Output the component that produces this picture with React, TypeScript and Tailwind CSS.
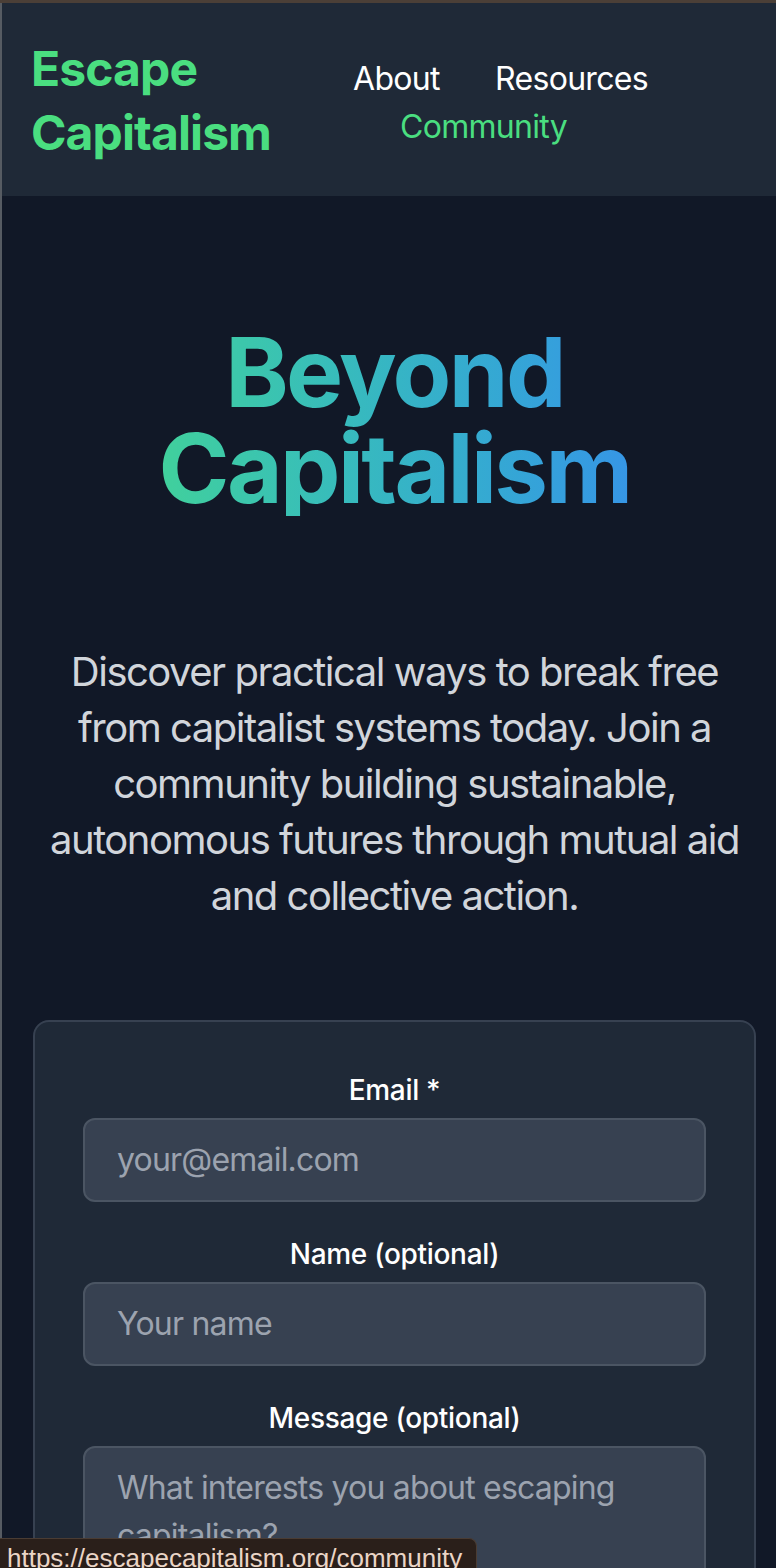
import React from "react";

export default function App() {
  return (
    <div
      className="min-h-[1568px] bg-[#111827] text-white"
      style={{ fontFamily: "Inter, 'Noto Sans', sans-serif" }}
    >
      <div className="h-[3px] bg-[#4b3f37]" />
      <div className="flex">
        <div className="w-[2px] shrink-0 bg-[#565b62]" />
        <div className="flex-1 min-w-0">
          <header className="flex items-center bg-[#1f2937] pt-[34px] pb-[31px] pl-[29px] pr-[32px]">
            <a className="w-[322px] shrink-0 text-[48px] font-bold leading-[64px] tracking-[-0.9px] text-[#4ade80]">
              Escape Capitalism
            </a>
            <nav className="flex-1 pt-[3px] text-[32px] leading-[48px] tracking-[-0.7px]">
              <a className="text-white">About</a>{" "}
              <a className="ml-[47px] text-white">Resources</a>{" "}
              <a className="ml-[47px] text-[#4ade80]">Community</a>
            </nav>
          </header>

          <main className="pl-[31px] pr-[20px] pt-[128px] pb-[128px]">
            <div className="text-center">
              <h1 className="bg-linear-to-r from-[#4ade80] to-[#3b82f6] bg-clip-text text-[96px] font-bold leading-[96px] tracking-[-2.6px] text-transparent">
                Beyond Capitalism
              </h1>
              <p className="mt-[128px] text-[40px] leading-[56px] tracking-[-1.5px] text-[#d1d5db]">
                Discover practical ways to break free from capitalist systems today. Join a
                community building sustainable, autonomous futures through mutual aid and
                collective action.
              </p>
            </div>

            <form className="mt-[96px] rounded-[16px] border-2 border-[#374151] bg-[#1f2937] p-[48px]">
              <div className="flex flex-col gap-[32px]">
                <div>
                  <label className="mb-[8px] block text-center text-[28px] font-medium leading-[40px] tracking-[-0.3px] text-white">
                    Email *
                  </label>
                  <input
                    type="email"
                    placeholder="your@email.com"
                    className="block w-full rounded-[12px] border-2 border-[#4b5563] bg-[#374151] px-[32px] py-[16px] text-[32px] leading-[48px] tracking-[-0.8px] text-white placeholder:text-[#9ca3af] outline-none"
                  />
                </div>
                <div>
                  <label className="mb-[8px] block text-center text-[28px] font-medium leading-[40px] tracking-[-0.3px] text-white">
                    Name (optional)
                  </label>
                  <input
                    type="text"
                    placeholder="Your name"
                    className="block w-full rounded-[12px] border-2 border-[#4b5563] bg-[#374151] px-[32px] py-[16px] text-[32px] leading-[48px] tracking-[-0.8px] text-white placeholder:text-[#9ca3af] outline-none"
                  />
                </div>
                <div>
                  <label className="mb-[8px] block text-center text-[28px] font-medium leading-[40px] tracking-[-0.3px] text-white">
                    Message (optional)
                  </label>
                  <textarea
                    rows={4}
                    placeholder="What interests you about escaping capitalism?"
                    className="block w-full resize-none rounded-[12px] border-2 border-[#4b5563] bg-[#374151] px-[32px] py-[16px] text-[32px] leading-[48px] tracking-[-0.8px] text-white placeholder:text-[#9ca3af] outline-none"
                  />
                </div>
                <button
                  type="button"
                  className="w-full rounded-[12px] bg-[#16a34a] py-[24px] text-[32px] font-semibold text-white"
                >
                  Join the Community
                </button>
              </div>
            </form>
          </main>
        </div>
      </div>

      <div
        className="fixed bottom-0 left-0 h-[30px] w-[477px] overflow-hidden whitespace-nowrap rounded-tr-[8px] border-t border-r border-[#4a3c33] bg-[#2a1f1a] pl-[7px] pt-[4px] text-[26px] leading-[30px] text-[#ead5c6]"
        style={{ fontFamily: "'Liberation Sans', Arial, sans-serif" }}
      >
        https://escapecapitalism.org/community
      </div>
    </div>
  );
}
